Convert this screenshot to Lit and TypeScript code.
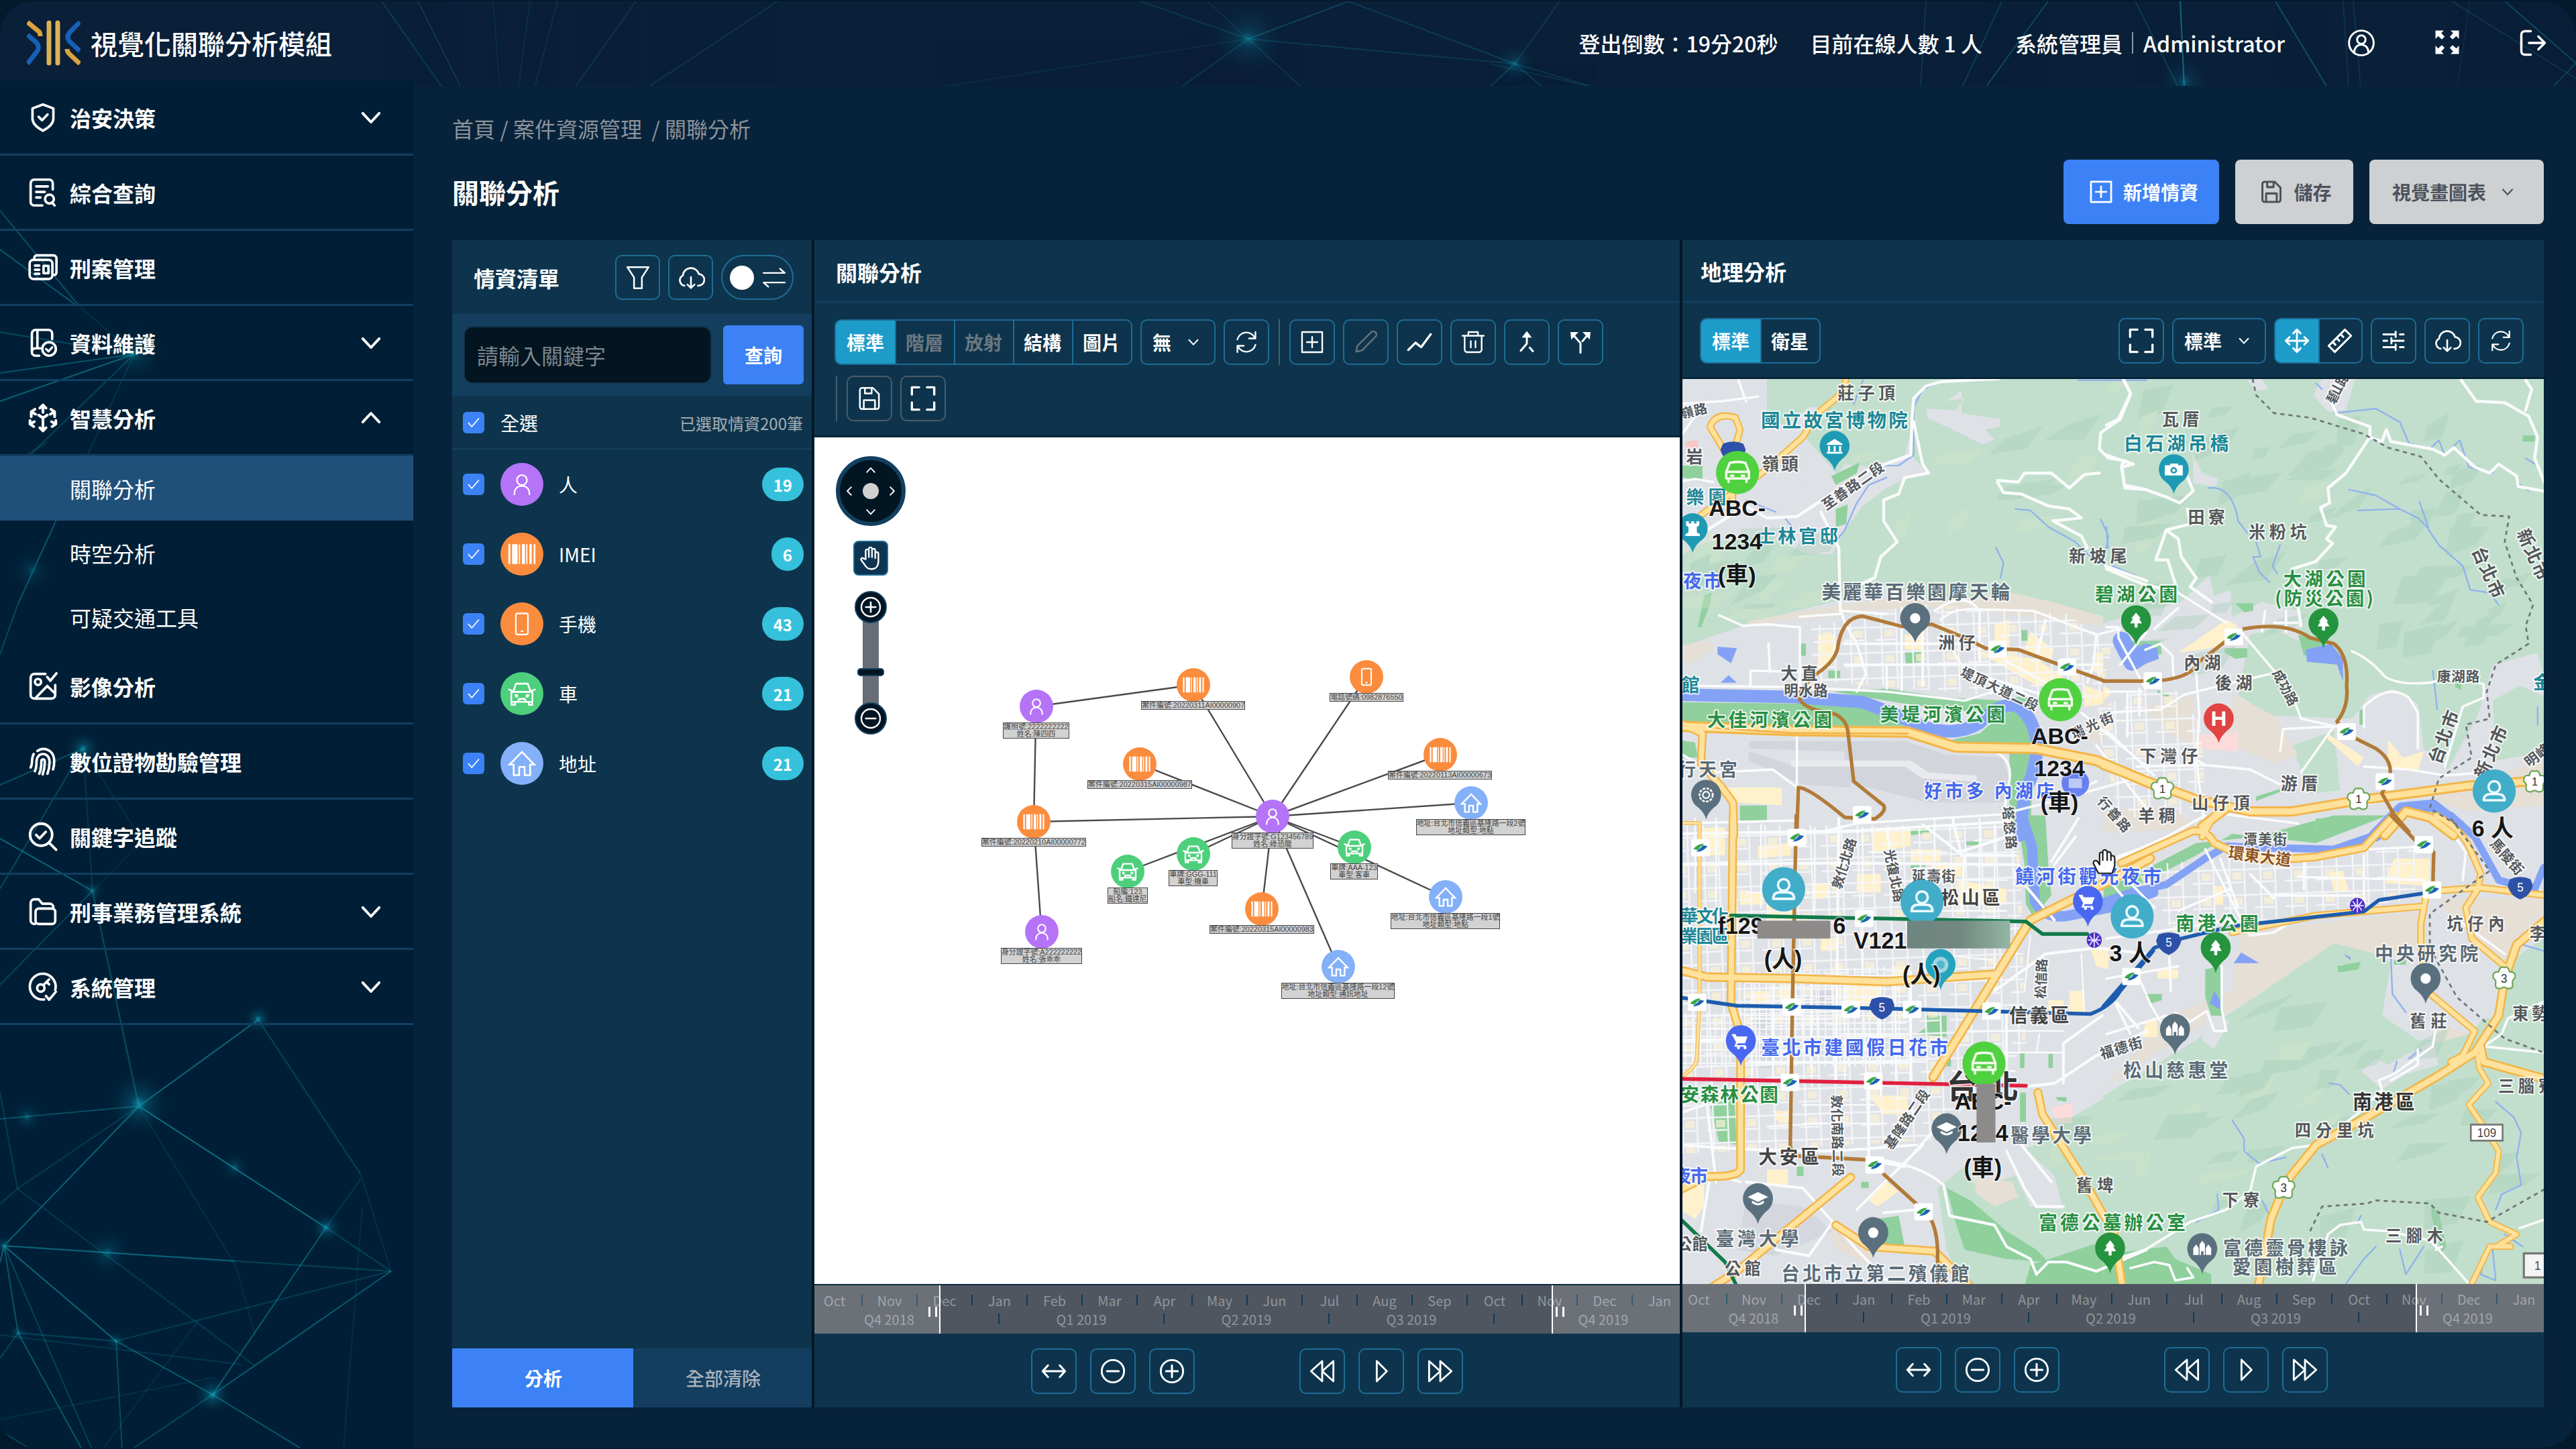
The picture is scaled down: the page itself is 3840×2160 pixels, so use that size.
import { LitElement, html, css, svg, nothing } from "lit";
import { customElement, property } from "lit/decorators.js";
import { classMap } from "lit/directives/class-map.js";

/* ------------------------------------------------------------------ icons */
const ICONS: Record<string, any> = {
  filter: svg`<path d="M2.5 2.5h19l-6 9.3v9.7h-7v-9.7z"/>`,
  cloud: svg`<path d="M6.5 18.8A4.6 4.6 0 0 1 5 10.2 7 7 0 0 1 18.7 8.8 5 5 0 0 1 18 18.8M12 11.5v9M9 17.8l3 3 3-3"/>`,
  swap: svg`<path d="M2 7.5h20l-4.5-4M22 16.5H2l4.5 4"/>`,
  refresh: svg`<path d="M3.5 9.5A8.8 8.8 0 0 1 20 8M20.5 2.5V8.5h-6M20.5 14.5A8.8 8.8 0 0 1 4 16M3.5 21.5V15.5h6"/>`,
  plusbox: svg`<path d="M2.5 2.5h19v19h-19zM12 7v10M7 12h10"/>`,
  pencil: svg`<path d="M3 21l1-5.500L17 2.800a2.500 2.500 0 0 1 4.200 4L8.500 19.800z"/>`,
  trend: svg`<path stroke-width="2" d="M2 19l6.500-6.500 5 4L22 5"/>`,
  trash: svg`<path d="M2 6h20M7.500 6V2.500h9V6M4 6v13a2.500 2.500 0 0 0 2.500 2.500h11A2.500 2.500 0 0 0 20 19V6M9.800 11v6M14.200 11v6"/>`,
  merge: svg`<path stroke-width="2" d="M12 4v9.500L6 20.500M15 17.500l3 3.500"/><path fill="currentColor" stroke="none" d="M7 7.500l5-6.500 5 6.500z"/>`,
  split: svg`<path stroke-width="2" d="M12 22.500V13L5 5M14 11l5-6"/><path fill="currentColor" stroke="none" d="M2 2h8l-7.200 7.500zM22 2h-8l7.200 7.500z"/>`,
  save: svg`<path d="M3.500 4.500a2 2 0 0 1 2-2H15l5.500 5.500v11.500a2 2 0 0 1-2 2h-13a2 2 0 0 1-2-2zM8 2.500v5h6v-5M7 21.500v-8h10v8"/>`,
  frame: svg`<path stroke-width="2" d="M2 8.500V2h6.500M15.500 2H22v6.500M22 15.500V22h-6.500M8.500 22H2v-6.500"/>`,
  move: svg`<path stroke-width="1.800" d="M12 1.500v21M1.500 12h21M8.500 5L12 1.500 15.500 5M8.500 19l3.500 3.500 3.500-3.500M5 8.500L1.500 12 5 15.500M19 8.500l3.500 3.500-3.500 3.500"/>`,
  ruler: svg`<path stroke-width="1.800" d="M2 16.500L16.500 2 22 7.500 7.500 22zM5.500 13l2.500 2.500M9 9.500l2.500 2.500M12.500 6l2.500 2.500"/>`,
  sliders: svg`<path stroke-width="1.800" d="M2.500 6h11.500M14 3.500v5M18 6h3.500M2.500 12H6M10 12h11.500M10 9.500v5M2.500 18h11.500M14 15.500v5M18 18h3.500"/>`,
  fit: svg`<path stroke-width="1.900" d="M1.500 12h21M6.500 6.500L1.500 12l5 5.500M17.500 6.500l5 5.500-5 5.500"/>`,
  minus: svg`<circle cx="12" cy="12" r="10.500" stroke-width="1.800"/><path stroke-width="1.900" d="M6.500 12h11"/>`,
  plus: svg`<circle cx="12" cy="12" r="10.500" stroke-width="1.800"/><path stroke-width="1.900" d="M6.500 12h11M12 6.500v11"/>`,
  rew: svg`<path stroke-width="1.700" d="M12 3v18L2 12zM22 3v18L12 12z"/>`,
  play: svg`<path stroke-width="1.700" d="M8 3l9 9-9 9z"/>`,
  ff: svg`<path stroke-width="1.700" d="M2 3v18l10-9zM12 3v18l10-9z"/>`,
  down: svg`<path stroke-width="2.200" d="M5 8.500l7 7.500 7-7.500"/>`,
  up: svg`<path stroke-width="2.200" d="M5 15.500L12 8l7 7.500"/>`,
  left: svg`<path stroke-width="2.200" d="M15.500 5L8.500 12l7 7"/>`,
  right: svg`<path stroke-width="2.200" d="M8.500 5l7 7-7 7"/>`,
  hand: svg`<path d="M7.200 13V5.200a1.500 1.500 0 0 1 3 0V11V3.300a1.500 1.500 0 0 1 3 0V11V4.600a1.500 1.500 0 0 1 3 0V12V7.800a1.500 1.500 0 0 1 3 0V15c0 4.500-2.500 7.300-6.500 7.300-3.700 0-5.200-1.800-6.700-4.500L3 13.700c-.6-1.500 1-2.400 2.200-1.300z"/>`,
  user: svg`<circle cx="12" cy="7.800" r="5"/><path d="M4.500 22c0-5.500 3-8.500 7.500-8.500s7.500 3 7.500 8.500"/>`,
  barcode: svg`<g fill="currentColor" stroke="none"><path d="M1 4h1.600v16H1zM4 4h4.500v16H4zM9.500 4h1v16h-1zM12 4h2.500v16H12zM15.500 4h1v16h-1zM18 4h2v16h-2zM21.500 4H23v16h-1.500z"/></g>`,
  phone: svg`<rect x="6" y="1.500" width="12" height="21" rx="1.800"/><path d="M11.300 19.300h1.400"/>`,
  car: svg`<path d="M4.500 10.500L7 3.500h10l2.500 7M3 10.500h18v8.500H3zM1 8.500l2.500 1M23 8.500l-2.500 1M3.200 19v2.500h3V19M17.800 19v2.500h3V19M8.500 19l1-2.500h5l1 2.500"/><path fill="currentColor" stroke="none" d="M5.500 12.500h3.200v2.800H6.500zM18.500 12.500h-3.200v2.800h2.200z"/>`,
  home: svg`<path stroke-linejoin="miter" d="M1.500 13L12 2.200 22.500 13H19v9h-4.700v-7h-4.600v7H5v-9z"/>`,
  check: svg`<path d="M5 12.500l4.500 5L19 6.500"/>`,
  account: svg`<circle cx="12" cy="12" r="10.500"/><circle cx="12" cy="9.200" r="3.600"/><path d="M6 20c0-4 2.500-6.500 6-6.500s6 2.500 6 6.500"/>`,
  expand: svg`<g fill="currentColor" stroke="none"><path d="M1.500 1.500h7.500L6.700 3.800l3 3.200L7.200 9.500l-3.300-3L1.500 9zM22.500 1.500H15l2.300 2.300-3 3.200 2.500 2.500 3.300-3L22.500 9zM1.500 22.500H9l-2.300-2.300 3-3.200-2.500-2.500-3.300 3L1.500 15zM22.500 22.500H15l2.300-2.300-3-3.200 2.500-2.500 3.300 3 2.400-2.500z"/></g>`,
  logout: svg`<path stroke-width="2" d="M10 2H5a3 3 0 0 0-3 3v14a3 3 0 0 0 3 3h5M8.500 12H22M16.500 6.500L22 12l-5.500 5.500"/>`,
  shield: svg`<path stroke-width="2" d="M12 1.500l8.500 3.200V13c0 4.500-4 7.500-8.500 9.800C7.500 20.500 3.500 17.500 3.500 13V4.700zM8.500 11.500l2.800 2.800 4.500-4.700"/>`,
  docsearch: svg`<path stroke-width="2" d="M20 9.500V4.500a3 3 0 0 0-3-3H5a3 3 0 0 0-3 3v15a3 3 0 0 0 3 3h6.500M6.500 7h9.500M6.500 11.500h7M6.500 16h3.500M21.500 22.500l-2.200-2.300"/><circle cx="17.300" cy="17.300" r="3.600" stroke-width="2"/>`,
  news: svg`<path stroke-width="2" d="M5 5.500V4a2 2 0 0 1 2-2h13.500A2.500 2.500 0 0 1 23 4.500V16a2 2 0 0 1-2 2"/><rect x="1.200" y="5.700" width="18.500" height="15.500" rx="3" stroke-width="2"/><path stroke-width="2" d="M5.500 10.300H9M5.500 13.700H9M5.500 17H9M12.500 10.500h4v6h-4z"/>`,
  docsafe: svg`<path stroke-width="2" d="M19.500 9V4.500a3 3 0 0 0-3-3H6a3 3 0 0 0-3 3v14.800M7.500 1.500v14.800M10 16.500H6a3 3 0 0 0 0 6h3"/><circle cx="17" cy="17" r="5.500" stroke-width="2"/><path stroke-width="1.800" d="M14.500 17l2 2 3-3.300"/>`,
  smart: svg`<path stroke-width="2.200" d="M12 7.500V1.800M9.500 4L12 1.500 14.500 4M12 16.500v5.700M9.500 20l2.500 2.500L14.500 20M12 12v3.500M12 12L8.500 9.700M12 12l3.500-2.300M5.500 5L2.500 7v4M1.500 14v3l3 2M18.500 5l3 2v4M22.500 14v3l-3 2M2.500 7l3.500 2M21.500 7L18 9M1.500 17L5 15M22.500 17L19 15"/>`,
  image: svg`<path stroke-width="2" d="M14 2H5a3 3 0 0 0-3 3v14a3 3 0 0 0 3 3h14a3 3 0 0 0 3-3v-8M6 21.500l9.500-9.800L22 18M15.500 4.500l2.500 3 5-6"/><circle cx="8" cy="8.500" r="2.500" stroke-width="2"/>`,
  finger: svg`<path stroke-width="2" d="M7.500 3.500c5-3.500 12.500-1 13.500 6 .4 3.500 0 6.500-.8 9M4.500 6c-1.500 2.500-1.300 5-1.500 7.500-.1 1.500-.5 2.500-1 3.500M5.500 20c1-2.500 1.300-4.500 1.300-8 0-4 2.700-6 5.200-6 3 0 5.300 2.200 5.400 6 .1 4-.6 7-1.700 10M9 22c1.500-3 1.700-6 1.700-10 0-2.200 2.800-2.200 2.800 0 .1 4-.4 7-1.700 10.500"/>`,
  track: svg`<circle cx="10.500" cy="10.500" r="9" stroke-width="2.100"/><path stroke-width="2.100" d="M17.200 17.200l5.500 5.500M6.500 10.700l2.800 2.800 5-5.300"/>`,
  folder: svg`<path stroke-width="2" d="M5.500 22H5a3 3 0 0 1-3-3V5a3 3 0 0 1 3-3h3.500L11.500 5.500h6a3 3 0 0 1 3 3"/><rect x="6" y="9.500" width="16" height="12.500" rx="2.500" stroke-width="2"/>`,
  gear: svg`<path stroke-width="2" d="M22 14.500A10.500 10.500 0 1 0 13 22.300M14.500 19.500l2.500 3 5.500-6.500M12.500 10.500L17 6M15 8l2 2"/><circle cx="10.300" cy="13" r="3" stroke-width="2"/>`,
};

const icon = (name: string, size = 40, sw = 1.5) => html`<svg width=${size} height=${size} viewBox="0 0 24 24" fill="none"
  stroke="currentColor" stroke-width=${sw} stroke-linecap="round" stroke-linejoin="round">${ICONS[name]}</svg>`;

const shared = css`
  * { box-sizing: border-box; }
  svg { display: block; flex: none; }
  .btn {
    width: 68px; height: 68px; flex: none;
    display: flex; align-items: center; justify-content: center;
    border: 2px solid #1e6c96; border-radius: 10px; color: #fff;
  }
`;

/* --------------------------------------------------------------- timeline */
const MONTHS = ["Oct", "Nov", "Dec", "Jan", "Feb", "Mar", "Apr", "May", "Jun", "Jul", "Aug", "Sep", "Oct", "Nov", "Dec", "Jan"];
const QUARTERS: [string, number][] = [["Q4 2018", 286], ["Q1 2019", 246], ["Q2 2019", 246], ["Q3 2019", 246], ["Q4 2019", 288]];

@customElement("time-player")
class TimePlayer extends LitElement {
  static styles = [shared, css`
    :host { display: flex; flex-direction: column; font-family: "Noto Sans CJK TC", sans-serif; --from: 188px; --shift: 0px; }
    :host([narrow]) { --from: 184px; --shift: 5px; }
    .strip { position: relative; height: 72px; background: #50565f; overflow: hidden; display: flex; justify-content: center; padding-right: var(--shift); }
    .scale { width: 1312px; flex: none; display: flex; flex-direction: column; padding-top: 9px; color: #8f959c; font-size: 20px; line-height: 28px; }
    .line { display: flex; height: 28px; }
    .m, .q { position: relative; flex: none; text-align: center; height: 28px; }
    .m { width: 82px; }
    .q.first { padding-left: 0; width: 286px; text-indent: -41px; }
    .q.last { padding-left: 38px; }
    .m + .m::before, .q + .q::before {
      content: ""; position: absolute; left: -1px; top: 5px; width: 2px; height: 16px; background: #0d3a5a;
    }
    .shade { position: absolute; top: 0; bottom: 0; background: rgba(255,255,255,.16); }
    .shade.l { left: 0; width: var(--from); border-right: 2px solid #fff; }
    .shade.r { right: 0; width: 191px; border-left: 2px solid #fff; }
    .grip { position: absolute; top: 32px; width: 13px; height: 15px; border: solid #fff; border-width: 0 3px; }
    .l .grip { right: 3px; }
    .r .grip { left: 4px; }
    .ctl { flex: 1; display: flex; justify-content: center; gap: 20px; padding-top: 22px; padding-right: var(--shift); }
    .gap { width: 116px; }
  `];
  render() {
    return html`
      <div class="strip">
        <div class="scale">
          <div class="line">${MONTHS.map((m) => html`<div class="m">${m}</div>`)}</div>
          <div class="line">${QUARTERS.map(([q, w], i) => html`<div
            class=${classMap({ q: true, first: i === 0, last: i === 4 })} style="width:${w}px">${q}</div>`)}</div>
        </div>
        <div class="shade l"><div class="grip"></div></div>
        <div class="shade r"><div class="grip"></div></div>
      </div>
      <div class="ctl">
        ${["fit", "minus", "plus"].map((n) => html`<div class="btn">${icon(n, 38)}</div>`)}
        <div class="gap"></div>
        ${["rew", "play", "ff"].map((n) => html`<div class="btn">${icon(n, 40)}</div>`)}
      </div>`;
  }
}

/* ------------------------------------------------------------- link graph */
type Kind = "user" | "barcode" | "phone" | "car" | "home";
const COLORS: Record<Kind, string> = { user: "#b573f8", barcode: "#fb8c3e", phone: "#fb8c3e", car: "#4dcf7c", home: "#83b0f8" };
const NODES: [string, Kind, number, number, string[]][] = [
  ["p1", "user", 1544.5, 1053, ["護照號:2222222222", "姓名:陳四四"]],
  ["i1", "barcode", 1778.7, 1021, ["案件編號:20220311AI00000907"]],
  ["ph", "phone", 2037, 1009, ["電話號碼:0982876550"]],
  ["i2", "barcode", 1699, 1139, ["案件編號:20220315AI00000987"]],
  ["i3", "barcode", 2146.6, 1125, ["案件編號:20220113AI00000673"]],
  ["h1", "home", 2192.5, 1197, ["地址:台北市信義區基隆路一段2號", "地址類型:地點"]],
  ["c", "user", 1897, 1217, ["身分證字號:G123456789", "姓名:綠恐龍"]],
  ["i4", "barcode", 1541, 1225, ["案件編號:20220210AI00000772"]],
  ["a", "car", 1681, 1299, ["船編:123", "船名:鐵達尼"]],
  ["b", "car", 1778.7, 1273, ["車牌:GGG-111", "車型:機車"]],
  ["d", "car", 2018.6, 1263, ["車牌:AAA-123", "車型:客車"]],
  ["i5", "barcode", 1881, 1354.7, ["案件編號:20220315AI00000983"]],
  ["h2", "home", 2154.6, 1337, ["地址:台北市信義區基隆路一段1號", "地址類型:地點"]],
  ["h3", "home", 1994.5, 1441, ["地址:台北市信義區基隆路一段12號", "地址類型:通訊地址"]],
  ["p2", "user", 1552.5, 1388.7, ["身分證字號:A222222222", "姓名:張乖乖"]],
];
const EDGES = ["p1 i1", "p1 i4", "i4 c", "i4 p2", "i1 c", "ph c", "i2 c", "i3 c", "h1 c", "a c", "b c", "d c", "i5 c", "h2 c", "h3 c"];

@customElement("link-graph")
class LinkGraph extends LitElement {
  static styles = [shared, css`
    :host { display: block; position: relative; background: #fff; overflow: hidden; font-family: "Liberation Sans", "Noto Sans CJK TC", sans-serif; }
    .edges { position: absolute; inset: 0; width: 100%; height: 100%; }
    .node { position: absolute; width: 0; height: 0; display: flex; flex-direction: column; align-items: center; }
    .disc { flex: none; width: 50px; height: 50px; margin-top: -25px; border-radius: 50%; display: flex; align-items: center; justify-content: center; color: #fff; }
    .label { flex: none; margin-top: -1px; border: 1px solid #444; background: #d2d2d2; color: #444; font-size: 10.9px; line-height: 11px; white-space: nowrap; text-align: center; position: relative; z-index: 1; }
    .tools { position: absolute; left: 32px; top: 28px; width: 104px; display: flex; flex-direction: column; align-items: center; color: #fff; }
    .pad { width: 104px; height: 104px; border-radius: 50%; background: #021522; border: 6px solid #12405f; display: grid; grid-template-columns: 24px 24px 24px; grid-template-rows: 28px 28px 28px; justify-content: center; align-content: center; align-items: center; justify-items: center; column-gap: 8px; row-gap: 3px; }
    .knob { width: 24px; height: 24px; border-radius: 50%; background: #d0d0d0; }
    .hand { margin-top: 22px; width: 52px; height: 52px; border-radius: 8px; border: 2px solid #1e6c96; background: #0d3450; display: flex; align-items: center; justify-content: center; }
    .zoom { margin-top: 23px; height: 214px; display: flex; flex-direction: column; align-items: center; justify-content: space-between; position: relative; }
    .zb { width: 48px; height: 48px; border-radius: 50%; background: #021522; border: 2px solid #12405f; display: flex; align-items: center; justify-content: center; position: relative; }
    .rail { position: absolute; top: 24px; bottom: 24px; width: 24px; background: #686c76; }
    .thumb { position: absolute; top: 115px; width: 40px; height: 12px; border-radius: 5px; background: #021522; border: 2px solid #12405f; }
  `];
  render() {
    const at = Object.fromEntries(NODES.map(([id, , x, y]) => [id, [x - 1214, y - 652]]));
    return html`
      <svg class="edges" viewBox="0 0 1290 1262">${EDGES.map((e) => {
        const [s, t] = e.split(" ");
        return svg`<line x1=${at[s][0]} y1=${at[s][1]} x2=${at[t][0]} y2=${at[t][1]} stroke="#4a4a4a" stroke-width="2.400"/>`;
      })}</svg>
      ${NODES.map(([id, kind, , , lines]) => html`
        <div class="node" style="left:${at[id][0]}px;top:${at[id][1]}px">
          <div class="disc" style="background:${COLORS[kind]}">${icon(kind, kind === "barcode" ? 34 : kind === "home" || kind === "car" ? 32 : 28, 1.8)}</div>
          <div class="label">${lines.map((l) => html`<div>${l}</div>`)}</div>
        </div>`)}
      <div class="tools">
        <div class="pad">
          <i></i>${icon("up", 20, 2.4)}<i></i>
          ${icon("left", 20)}<div class="knob"></div>${icon("right", 20)}
          <i></i>${icon("down", 20)}<i></i>
        </div>
        <div class="hand">${icon("hand", 38)}</div>
        <div class="zoom">
          <div class="rail"></div><div class="thumb"></div>
          <div class="zb">${icon("plus", 32)}</div>
          <div class="zb">${icon("minus", 32)}</div>
        </div>
      </div>`;
  }
}

/* -------------------------------------------------------------------- map */
/* The map is cut in four tiles, each with its own local coordinates. */
type Tile = "A" | "B" | "C" | "D";
const TILE: Record<Tile, string> = {
  A: "translate(2500 540) scale(.4464)",
  B: "translate(3140 540) scale(.4464)",
  C: "translate(2500 1220) scale(.4464 .4592)",
  D: "translate(3140 1220) scale(.4464 .4592)",
};
const HILL = "#c1dfcc", CITY = "#dee1e6", SAND = "#e5dfd6", PARK = "#8fd09d", WATER = "#83a2f6", YEL = "#fff1cb", PINK = "#fbdcda";

const AREAS: [Tile, string, string][] = [
  ["A", HILL, "M300 50H1580V890L1200 800 1100 770 880 800 660 740 560 790 400 830 250 870 16 950V640L100 600 300 580 440 640 520 620 600 450 420 240 300 200z"],
  ["A", CITY, "M0 50H290L285 140 360 220 440 150 500 150 420 240 360 300 420 280 410 400 440 450 480 470 520 400 560 340 640 350 760 310 790 200 800 180 780 310 840 370 760 390 700 420 620 480 560 560 520 640 440 640 300 540 200 600 100 590 0 640z"],
  ["A", CITY, "M830 155L930 160 960 120 900 130 950 95 950 170 1080 190 1080 215 1030 225 1060 260 1020 275 900 215 840 190z"],
  ["A", PARK, "M515 380L610 335 600 370 530 410zM530 490L570 475 565 540 530 550zM70 885L90 780 115 770 110 810 80 885zM0 345L85 345 85 400 0 380z"],
  ["A", SAND, "M230 865L400 835 560 810 680 790 880 800 1100 765 1250 800 1568 890 1568 900 1250 860 1000 830 800 820 640 830 520 850 380 860 250 880z"],
  ["A", SAND, "M0 950L90 930 130 950 60 1000 0 1010zM1340 1260L1470 1180 1568 1150V1300L1430 1270z"],
  ["A", PARK, "M0 1135L420 1140 600 1150 760 1200 900 1265 1010 1240 1090 1170 1160 1165 1250 1290 920 1270 780 1215 0 1210z"],
  ["A", PARK, "M520 1100L700 1090 900 1120 1100 1130 1160 1110 1190 1150 1000 1170 760 1140z"],
  ["A", PARK, "M1110 1290H1190L1180 1568H1110zM0 1260L60 1270 70 1320 0 1320zM210 1480H300V1530H210zM760 965H815V1000L765 1010zM410 940h20v40h-20zM505 1030h40v25h-40zM1150 895h20v35h-20zM1430 885h20v30h-20z"],
  ["A", "#d3d5dc", "M240 1265H760L900 1310 1090 1320 1110 1400 1090 1470 840 1470 560 1400 560 1300 240 1290zM240 1300L400 1350H560L580 1420 420 1410 240 1330z"],
  ["A", "#e8eaee", "M380 1330H780L840 1370 1000 1380V1400L820 1390 760 1350H380z"],
  ["A", YEL, "M470 910H530V970L470 1040zM1060 870L1110 860V960L1060 930zM1010 970L1200 990 1300 1060 1200 1080zM760 910h60v50h-60zM1360 1080L1450 1110 1440 1140 1360 1150zM150 1420H350V1480L200 1470zM1180 900L1260 960 1240 1000 1160 960zM1390 970H1440V1060L1390 1030z"],
  ["A", WATER, "M135 950L200 955 180 1005 135 975zM145 1070L172 1045 200 1070z"],
  ["A", "#f8c8c6", "M30 265L70 260V290L30 290z"],
  ["B", HILL, "M-10 50H1470V1568H-10z"],
  ["B", CITY, "M-10 870L250 800 345 710 360 780 415 760 420 850 520 800 640 830 650 930 500 960 440 1110 560 1180 820 1190 880 1110 960 1090 1040 1140 1060 1290 1140 1360 1240 1180 1290 1010 1440 970 1470 1080V1568H-10z"],
  ["B", CITY, "M720 55H830L800 160 740 165 690 110zM290 310L320 370 375 390 365 415 290 405zM470 60L520 55 540 90 500 95z"],
  ["B", HILL, "M480 910L560 890 640 930 800 990 810 1180 540 1180 440 1110zM620 1280L760 1230 780 1430 680 1440zM1060 1100L1140 1030 1270 1070 1170 1200 1080 1200zM1290 1130L1380 1080 1470 1120V1300L1300 1330z"],
  ["B", SAND, "M420 1110L560 1180 640 1310 560 1340 420 1280zM130 1150L290 1110V1280L200 1240zM1040 1440L1470 1330V1480L1200 1500zM-10 1500L200 1480 330 1560-10 1568z"],
  ["B", PARK, "M50 930L180 930 185 975 110 980zM640 910L720 930 740 960 660 980zM395 955H470V985L430 990 395 970zM430 805L490 805 490 830 460 835zM845 1160H860V1210H845zM1165 1060H1185V1095L1165 1085zM700 1525L745 1520V1568H700zM500 1450L580 1425 580 1435 500 1465zM170 1095L210 1110 205 1120 170 1105zM1390 245h40v20h-40z"],
  ["B", WATER, "M50 925L90 945 170 955 175 990 110 1015 60 985zM665 960L750 940 790 990V1065L770 1010 670 1000z"],
  ["B", YEL, "M240 970L400 860 440 880 380 950zM940 1260L990 1320 1060 1300 1040 1370 940 1350zM740 1240L860 1320 840 1350 740 1260zM-10 1080L20 1100-10 1130z"],
  ["B", PINK, "M310 1245L440 1235V1300L310 1290z"],
  ["C", PARK, "M1135-10H1230L1240 160 1250 250 1190 320 1165 280 1160 150zM775 35L860 25V45L775 55zM830 640H900V710L800 700 830 680zM110 930L190 900 200 1060 140 1050zM1145 890H1165V985H1145zM1145 760h15v50h-15zM1240 765h15v45h-15zM900 770h15v35h-15zM670 1300L740 1290 760 1390 690 1400zM1265 905L1300 905 1300 920 1270 915zM780 150h50v12h-50zM965 75h55v12h-55zM400 1130h22v30h-22zM615 1180h25v20h-25z"],
  ["C", HILL, "M1130 1080L1200 1060 1300 980 1568 830V1520H960L900 1400 870 1200 960 1130z"],
  ["C", PARK, "M900 1200L980 1240 1100 1340 1200 1400 1240 1440 1100 1430 960 1400 930 1310zM1180 1450L1400 1380 1568 1370V1520H1160z"],
  ["C", CITY, "M960 1110L1140 1050 1260 1160 1290 1270 1180 1260 1130 1160 1000 1200z"],
  ["C", SAND, "M990 1160L1120 1180 1140 1230 1060 1260 1000 1220zM510 1330L660 1400 640 1450 530 1400z"],
  ["C", PINK, "M1250 940L1320 925V990L1270 990z"],
  ["C", YEL, "M90 30H160V120H90zM270 90L380 80V120L270 130zM210 240H290V280H210zM300 280h90v50h-90zM650 30H780V90L650 110zM780 100H880V140H780zM450 210h60v50h-60zM600 180h80v60h-80zM850 150h100v40h-100zM560 520h120v100h-120zM480 390h60v40h-60zM340 540h40v60h-40zM720 480h60v60h-60zM250 560h60v40h-60zM320 950H380V990L330 980zM640 900H770V960L690 960zM940 200L1100 230 1100 280 940 280zM300 1140h70v50h-70zM10 1170H90V1260L60 1300 10 1270zM1310 560h50v80h-50zM1380 420H1440V490L1400 480zM1240 590h50v50h-50zM700 1180L740 1210 670 1260 640 1240z"],
  ["C", "#d5d7de", "M230 1240L420 1260 520 1340 330 1420 200 1400zM240 640L330 600V700L250 690zM270 720h60v90h-60zM430 560h100v60h-100z"],
  ["D", HILL, "M-10 900L60 860 300 720 400 640 480 590 760 405 880 430 950 470 920 640 1040 720 1100 720 1220 700 1300 590 1370 450 1470 380V1520H-10z"],
  ["D", SAND, "M450 370L1060 300 1080 420 940 450 760 405 480 590 380 640 200 740 0 870 200 640 320 600 420 560zM1100 260L1470 260V330L1360 420 1320 470 1160 330zM1080 650L1210 700 1100 730z"],
  ["D", CITY, "M850 820L900 780 940 800 1090 720 1110 800 1000 830 920 880zM1120 480L1250 440 1320 540 1290 650 1200 640 1110 560zM320 700L340 620 410 660 360 750 320 720z"],
  ["D", PARK, "M60 240L300 120 420 50 700 80 940-10H760L500 60 300 80 100 180-10 230V270zM330 490L380 480 385 640 350 640 330 580zM770 480L850 465 840 490 775 500zM125 570H185V590L150 600zM1085 1260L1110 1280 1135 1390 1120 1410 1085 1290zM40 1410L200 1390 230 1430 350 1480V1520H-10V1450zM700 0H740V35H700zM960 460L1000 455V475H960zM1010 140h65v14h-65z"],
  ["D", WATER, "M425 470L450 435 510 470zM790 440L815 450 815 460zM345 600L360 560 380 590 380 620z"],
  ["D", YEL, "M745 175L790 170 810 235 760 240zM960 130H1080V220L930 210zM170 490H240V520H170zM130 660L170 650V710H120zM360 220h30v60h-30z"],
];

const STREAMS: [Tile, string, number][] = [
  ["A", "M0 1110L400 1118 620 1135 740 1180Q900 1270 1010 1205 1080 1130 1140 1150 1195 1190 1205 1290L1185 1380 1160 1440 1145 1580", 42],
  ["C", "M1150-10L1185 90 1195 270Q1230 330 1310 315L1440 290 1590 240", 34],
  ["D", "M-10 270L80 240 200 215 330 130 400 90 520 95 760 100 880 60 960-20", 24],
  ["B", "M900 1580L985 1490 1090 1480 1180 1550", 40],
  ["D", "M1150-10L1230 60 1310 200 1400 225M1430 230L1460 160", 24],
  ["A", "M1568 60L1340 60M1000 60L880 65 820 90 790 150 790 310 740 345 690 345M700 385L640 410 600 470 560 560 530 600M590 140L620 60M1130 490L1180 495 1240 550 1330 600 1370 640 1430 680 1530 710M1065 620L1090 670 1080 720M1415 525L1440 580 1430 640M230 460L330 500M360 520L380 545", 5],
  ["A", "M1485 930L1520 1000 1568 970", 60],
  ["B", "M760 170L900 155 980 200 1010 270 1080 290 1110 260 1130 310 1180 260 1210 350 1290 370M810 425L900 445 980 490 840 495M980 490L1040 520 1070 550 1110 610 1190 680 1215 760 1280 770 1310 810M1045 465L1075 550M340 420Q420 410 440 530L470 570M500 600L515 650 490 650 510 700 545 735M580 610L555 680 570 705M0 550L5 620M20 680L90 710M1370 400L1410 430M1400 320L1430 340M1090 1030L1105 1160M1440 1150V1210M700 70L720 90", 5],
  ["D", "M950 450L955 570 1000 630M745 860L780 865 810 895M420 980L460 1040 460 1080 510 1120 600 1100M720 1090L740 1135M1300 920L1360 970 1385 1020 1370 1100 1385 1190 1320 1220 1300 1270M1390 1390L1330 1350M800 1510L860 1430 900 1390M980 1400L1000 1480 1060 1390M1270 1390L1250 1480 1300 1500 1290 1400M370 1220L375 1270 300 1310M520 1240L540 1280M850 1290L840 1310M1050 750L1010 780M970 790L960 820M1390 410L1460 430", 5],
];

const WHITE: [Tile, string, number][] = [
  ["A", "M1075 55L880 65 830 80 790 120 785 180 780 310 640 360 500 450 400 515 300 520 230 480 100 560M790 200L820 340 840 370 760 385 740 440 690 460 690 530 735 600 680 650 660 720 570 760M480 500L540 620 545 830M1490 55L1515 105 1480 190 1415 235 1410 290 1440 320 1500 330 1485 340 1495 420 1568 425M1070 395L1140 400 1160 370 1250 370 1310 420 1360 375 1410 370M1070 400L1090 435 1150 440 1240 480 1310 490 1350 520 1255 530 1350 580 1370 620M1430 680L1568 730", 10],
  ["A", "M0 140L150 130 270 115M205 60L230 130M0 400L60 390 120 400M60 180L10 250M16 1080L400 1085 700 1100 960 1130 1120 1080 1200 1130M245 1080V1030L470 1035M305 940L310 1035M140 845L220 880 300 875 410 885V1080M410 850L545 840M545 820L560 870 600 940 630 1040 600 1100M750 820V1095M555 940H1020M560 1010H1100M820 900V1080M700 1010V1090M400 1180V1568M0 1300L120 1370 320 1360 400 1420M0 1540L400 1530M480 1568L600 1540 1080 1510 1240 1470 1568 1380M550 830L700 840M880 860Q920 820 1000 825L1190 830 1400 910 1480 890M860 830Q960 760 1010 830V1000M1230 860L1200 990M1400 910L1390 1010 1370 1070M920 960L960 1030 1060 1060 1250 1120M1100 1000L1250 1080M1060 1300Q1130 1330 1105 1420L1090 1510M1350 1170L1470 1270 1568 1350M1400 1280L1568 1490M1250 1470L1400 1400M1568 900L1480 1010M1300 1010H1420", 8],
  ["B", "M55 55L80 105 40 190 0 210M0 310L90 340 50 350 60 410 130 425 200 450 245 470 290 430 265 370M270 490L280 540 200 560 240 590 250 650 300 720 280 750 350 800M200 560L165 660 205 660 230 740M0 690L120 740 240 770M740 110L770 175 880 215 880 250 800 370 740 420 745 470 715 485 735 545 765 550 735 590 755 605 700 665 620 690 650 880M880 250L920 265 935 225 950 265 1090 290 1130 310 1160 285 1230 350 1280 370 1310 340 1370 380 1375 415 1460 430M1185 60L1235 130 1330 135 1410 180 1440 250 1430 320 1470 420M1400 60L1420 90 1400 160", 10],
  ["B", "M240 820L160 890M0 885H40V920L130 1090M240 770L400 870M300 1040L310 1180 300 1330 330 1568M450 900L560 1030 600 1060 650 1190 760 1215 650 1370M0 1170L180 1160 260 1110 420 1070 550 1040M820 965Q880 990 930 1050 980 1080 1080 1070L1160 1050 1260 1075 1260 1120 1190 1150 1130 1350M0 1230L160 1380M100 1350L330 1345 480 1360 580 1410M330 1345L250 1300M580 1300L590 1225 780 1215M860 1220V1150Q940 1070 1010 1120L1040 1170V1290M860 1350L1010 1360 1130 1380 1260 1370M520 900L530 830M560 870H640M600 830V900M650 1500L900 1470M400 1510L640 1540M70 1100V1250M110 1090V1180M130 960L180 940 220 980 225 1060M0 1100H120", 8],
  ["C", "M0 50L600 40 1120 10M540 0L530 860M0 150L540 145 1140 150M0 720L340 715M780 500V860M100 930L130 1180M0 960L90 930M0 1060L250 1075 520 1080 800 1060M230 1180L420 1200 520 1310 600 1400 700 1500M640 880V1110L760 1130M860 1010L760 1120M600 1270L820 1060M690 1110Q820 1130 890 1190L910 1290 1060 1320 1100 1390 1180 1430 1200 1480 1240 1440 1300 1440 1400 1470 1568 1400M1170 870L1260 860 1400 770 1568 690M1100 620V860M1060 560L1230 440 1400 420 1568 440M1290 860V730L1420 640M1470 600L1540 680M950 120L920 0M960 120H1130M960 120L950 300M700 40L710 90M820 20L940 110 1100 60M1330 60L1260 150M1340 0L1250 140M1400 150L1568 90M1130 180L1260 330M1100 1080L1160 1200 1200 1260 1290 1260M1150 1060L1250 1180M110 1150L210 1180M80 1340L110 1160M330 1400L440 1420 520 1310M800 1270L690 1280", 9],
  ["C", "M60 0V240M130 0V280M280 20V290M460 30V300M620 30V520M860 0V220M1010 0V300M1060 20V560M250 560V900M320 540V900M450 540V870M560 540V880M680 540V900M730 540V860M230 240H380M420 240H600M640 110H900M780 200H1100M800 300H1100M240 650H520M550 700H760M240 790H520M550 790H830M930 690H1290M960 760H1290M920 820H1130M420 990H700M420 930H660M300 1000L500 990M860 440L1050 460M1210 700L1200 760M1180 380L1160 560M1350 440L1360 640", 5],
  ["D", "M-10 150L200 60 330-10M380 130L440 290M410 230L240 300M0 390L80 380 420 330M330 100L440 310 480 380 560 370 610 340M660 130V230M860 120V270M640 190L1060 200M560 250L840 250M480 180L560 260M40 170L160 290M880 100L1080 90M0 190L120 330M385 480V620L400 690H360L335 625 280 660 230 630M210 450L215 560M30 600L80 700M110 520L150 610 220 720M0 520L240 480M0 700L200 640M1100 680L1090 740 960 830 910 850 920 880 850 950 700 1060 620 1070 500 1130 480 1210 400 1270 280 1310 130 1400 0 1440M1470 590L1340 650 1320 700 1260 740 1460 760M1040 750V800L950 850M740 1350L780 1320 850 1310 860 1335 940 1340 1080 1370 1110 1400 1210 1510M1100 1400L1120 1390M690 1500L740 1350M1380 1330L1470 1300M80 1460L160 1440 210 1450 230 1500 290 1490 270 1460M1120 0L1200 110 1190 200M1160 320L1330 440", 8],
];

const HIGH: [Tile, string, number][] = [
  ["C", "M16 15H75V600L65 790Q40 830 0 845", 13],
  ["C", "M187-10L180 600 212 700V1140Q200 1165 100 1162L0 1210", 29],
  ["A", "M0 1200L85 1240 80 1340 150 1420 187 1470 190 1580", 28],
  ["A", "M565 50L555 100 470 170 420 250 330 330 270 380M185 460L190 350 110 215Q130 165 195 185L210 225 190 300 210 340M80 510L180 440", 24],
  ["C", "M0 490L100 515 400 520 700 530 920 515 1065 505", 30],
  ["C", "M855 840L1180 330 1430 210 1580 130", 32],
  ["D", "M50 145L290 40Q340 40 360 80L450 120 560 135 700 125 860 95 960-10", 28],
  ["B", "M-10 1345L300 1460 480 1500 620 1500 860 1460 1200 1415 1470 1395M930 1580L1000 1500 1080 1520 1160 1580M320 1550L400 1490", 34],
  ["A", "M0 1215L380 1230 770 1235 930 1285 1200 1290 1400 1330 1590 1410", 38],
  ["D", "M320 60L360-10M1100-10Q1180 30 1210 90L1250 180 1240 230 1200 290 1220 390 1330 480M1100 235L1250 225 1380 240 1470 250M420 370L700 315 1060 285M1070 240L1050 340 1050 420 1070 560 1230 690 1190 770 1150 790", 24],
  ["D", "M1240 770L1245 810 1275 860 1210 930 1260 1000 1310 1080 1300 1150 1240 1230 1280 1310 1370 1350 1310 1385 1350 1390 1280 1390 1215 1520", 21],
  ["D", "M1250 740L1260 790 1480 850M1480 320L1370 410 1330 520 1310 640 1230 760 1100 840 850 980 700 1060 600 1180 550 1300 505 1530", 31],
  ["C", "M1205 890L1220 960 1350 1160 1460 1350 1487 1520M580 1165L400 1310 200 1470 120 1520M530 1320L640 1390 860 1405 980 1520", 29],
];

const METRO: [Tile, string, string, number][] = [
  ["A", "M400 1568L405 1420Q440 1420 560 1520L660 1525Q700 1500 690 1480L590 1400 570 1230Q560 1170 480 1165 410 1150 405 1110L450 1050Q520 1010 535 960 550 850 620 848L750 882 850 875 960 920 1030 955 1140 960 1290 1015 1430 1065H1580", "#b17b38", 12],
  ["B", "M-10 1065L150 1065Q280 1060 310 1000L420 915 460 890Q600 865 680 920L760 940Q810 980 802 1080 810 1150 770 1200L800 1240 900 1290Q960 1330 945 1390L920 1440 960 1510 1010 1568", "#b17b38", 12],
  ["D", "M950-10L1030 70 1093 110 1090 230", "#b17b38", 12],
  ["C", "M398-10L385 610 378 1060 385 1095 630 1108M690 1155L820 1270Q865 1300 870 1400V1520", "#b17b38", 12],
  ["C", "M0 845L1165 868", "#e0203f", 12],
  ["C", "M0 580L200 608 600 615 1380 635Q1450 610 1480 560L1590 430", "#1d5cae", 12],
  ["D", "M-10 610L80 510 160 420 250 390 420 350 860 302 910 265 1080 240", "#1d5cae", 12],
  ["C", "M180 315L1165 335 1220 375 1370 375M0 1290L160 1440 200 1520", "#127a4a", 12],
];

const BORDER: [Tile, string][] = [
  ["B", "M488 55L500 110 560 170 680 185 860 240 940 285 1050 315 1110 390 1250 510 1345 515 1330 600 1370 720 1425 810 1400 880 1410 940 1300 1010 1270 1100 1280 1190 1200 1210 1220 1320 1110 1390 1080 1490 1180 1550"],
  ["D", "M1150 0L1280 170 1080 310V420L1170 580 1330 715 1460 760M680 1340L720 1260 870 1250 900 1240 1080 1250 1110 1280 1270 1310 1470 1200"],
];

const DARK = "#55585c", TEAL = "#1c8797", GRN = "#288f42", BLUE = "#4468ee", SLATE = "#5a6b77";
/* tile, text, x centre, y centre, width, size, colour, rotation */
const LABELS: [Tile, string, number, number, number, number, string, number?][] = [
  ["A", "莊子頂", 632, 98, 192, 56, DARK], ["A", "國立故宮博物院", 525, 190, 490, 64, TEAL], ["A", "嶺路", 55, 160, 90, 44, DARK, -14],
  ["A", "岩", 58, 312, 54, 56, DARK], ["A", "嶺頭", 344, 335, 122, 58, DARK], ["A", "至善路二段", 585, 410, 240, 46, DARK, -35],
  ["A", "樂園", 97, 448, 134, 60, TEAL], ["A", "士林官邸", 402, 575, 272, 62, TEAL], ["A", "夜市", 85, 725, 130, 62, BLUE],
  ["A", "美麗華百樂園摩天輪", 797, 763, 629, 64, SLATE], ["A", "新坡尾", 1405, 643, 194, 56, DARK],
  ["A", "洲仔", 934, 933, 124, 56, DARK], ["A", "大直", 408, 1035, 124, 56, DARK], ["A", "明水路", 430, 1093, 146, 48, DARK],
  ["A", "館", 45, 1075, 58, 60, TEAL], ["A", "大佳河濱公園", 309, 1190, 418, 62, GRN], ["A", "美堤河濱公園", 887, 1172, 418, 62, GRN],
  ["A", "行天宮", 102, 1357, 198, 60, SLATE], ["A", "好市多 內湖店", 1042, 1427, 434, 60, BLUE], ["A", "瑞光街", 1385, 1210, 150, 44, DARK, -24],
  ["A", "堤頂大道二段", 1078, 1088, 280, 44, DARK, 25], ["A", "行善路", 1462, 1508, 140, 44, DARK, 48],
  ["B", "碧山路", 770, 85, 110, 44, DARK, -62], ["B", "瓦厝", 248, 187, 124, 56, DARK], ["B", "白石湖吊橋", 233, 267, 350, 62, TEAL],
  ["B", "田寮", 334, 512, 124, 56, DARK], ["B", "米粉坑", 572, 562, 194, 56, DARK], ["B", "碧湖公園", 100, 771, 276, 62, GRN],
  ["B", "大湖公園", 728, 720, 276, 62, GRN], ["B", "(防災公園)", 727, 785, 329, 62, GRN], ["B", "內湖", 320, 998, 124, 56, DARK],
  ["B", "後湖", 425, 1067, 124, 56, DARK], ["B", "康湖路", 1175, 1047, 142, 46, DARK], ["B", "成功路", 600, 1085, 130, 44, DARK, 62],
  ["B", "台北市", 1280, 700, 180, 58, DARK, 66], ["B", "新北市", 1430, 640, 180, 58, DARK, 66], ["B", "台北市", 1122, 1250, 185, 58, DARK, -70],
  ["B", "新北市", 1280, 1300, 185, 58, DARK, -66], ["B", "下灣仔", 208, 1310, 194, 56, DARK], ["B", "游厝", 644, 1403, 124, 56, DARK],
  ["B", "山仔頂", 382, 1467, 194, 56, DARK], ["B", "羊稠", 168, 1510, 124, 56, DARK], ["B", "金", 1455, 1065, 56, 60, TEAL], ["B", "明峰街", 1455, 1295, 140, 46, DARK, -38],
  ["C", "塔悠路", 1113, 30, 140, 44, DARK, 84], ["C", "敦化北路", 555, 145, 170, 44, DARK, -72], ["C", "光復北路", 728, 185, 175, 44, DARK, 78], ["C", "延壽街", 857, 185, 145, 46, DARK],
  ["C", "松山區", 980, 253, 197, 60, "#444"], ["C", "饒河街觀光夜市", 1373, 183, 488, 62, BLUE], ["C", "華文化", 93, 313, 160, 58, TEAL], ["C", "業園區", 93, 378, 160, 58, TEAL],
  ["C", "信義區", 1209, 635, 200, 62, "#444"], ["C", "松信路", 1213, 520, 130, 44, DARK, -88], ["C", "臺北市建國假日花市", 593, 740, 625, 62, BLUE],
  ["C", "福德街", 1482, 742, 145, 46, DARK, -16], ["C", "安森林公園", 175, 892, 326, 62, GRN], ["C", "醫學大學", 1249, 1025, 270, 62, SLATE],
  ["C", "基隆路二段", 765, 975, 225, 44, DARK, -55], ["C", "敦化南路二段", 538, 1030, 265, 44, DARK, 89], ["C", "大安區", 373, 1093, 203, 62, "#444"],
  ["C", "夜市", 45, 1157, 116, 60, BLUE], ["C", "舊埤", 1395, 1187, 124, 54, DARK], ["C", "臺灣大學", 268, 1360, 278, 62, SLATE], ["C", "公館", 50, 1378, 105, 52, DARK],
  ["C", "公館", 219, 1457, 120, 54, DARK], ["C", "台北市立第二殯儀館", 662, 1473, 628, 62, SLATE], ["C", "富德公墓辦公室", 1453, 1308, 490, 62, GRN],
  ["D", "潭美街", 530, 65, 145, 46, DARK], ["D", "環東大道", 513, 120, 210, 52, "#8f5524", 7], ["D", "南港公園", 370, 335, 276, 62, GRN],
  ["D", "坑仔內", 1233, 338, 192, 54, DARK], ["D", "中央研究院", 1069, 433, 346, 62, SLATE], ["D", "李", 1440, 372, 54, 54, DARK], ["D", "舊莊", 1075, 655, 124, 54, DARK],
  ["D", "東勢", 1415, 630, 118, 54, DARK], ["D", "松山慈惠堂", 231, 812, 350, 62, SLATE], ["D", "三腦寮", 1402, 865, 188, 54, DARK], ["D", "南港區", 926, 915, 207, 64, "#333"],
  ["D", "四分里坑", 761, 1010, 264, 54, DARK], ["D", "下寮", 449, 1235, 124, 54, DARK], ["D", "三腳木", 1028, 1350, 192, 54, DARK],
  ["D", "富德靈骨樓詠", 598, 1390, 418, 62, SLATE], ["D", "愛園樹葬區", 595, 1452, 349, 62, SLATE], ["D", "馬陵街", 1340, 122, 140, 46, DARK, 48],
];

/* tile, x, y, colour, glyph */
const PINS: [Tile, number, number, string, string][] = [
  ["A", 526, 280, "#1f9ab5", "museum"], ["A", 52, 555, "#1f9ab5", "castle"], ["A", 795, 855, "#5a707e", "dot"], ["A", 97, 1445, "#5a707e", "wheel"],
  ["B", 225, 358, "#1f9ab5", "camera"], ["B", 99, 862, "#24943e", "tree"], ["B", 725, 872, "#24943e", "tree"], ["B", 375, 1190, "#e24343", "h"],
  ["C", 1372, 270, "#4a67f2", "cart"], ["C", 213, 722, "#4a67f2", "cart"], ["C", 900, 1008, "#5a707e", "cap"], ["C", 270, 1235, "#5a707e", "cap"],
  ["C", 655, 1345, "#5a707e", "dot"], ["C", 1446, 1395, "#24943e", "tree"], ["C", 880, 475, "#24a3bd", "ring"],
  ["D", 365, 420, "#24943e", "tree"], ["D", 229, 685, "#5a707e", "temple"], ["D", 1066, 520, "#5a707e", "dot"], ["D", 320, 1397, "#5a707e", "temple"],
];
const GLYPH: Record<string, any> = {
  museum: svg`<path d="M-26-8L0-24 26-8V-4H-26zM-22 0h7v18h-7zM-3.500 0h7v18h-7zM15 0h7v18h-7zM-26 19h52v6h-52z"/>`,
  castle: svg`<path d="M-22-24h9v7h8v-7h10v7h8v-7h9v14l-8 5v18l10 6v6h-48v-6l10-6v-18l-8-5z"/>`,
  dot: svg`<circle r="17"/>`,
  wheel: svg`<circle r="22" fill="none" stroke="#fff" stroke-width="6" stroke-dasharray="9 4"/><circle r="11" fill="none" stroke="#fff" stroke-width="5"/>`,
  camera: svg`<path d="M-30-14h18v-6h26v6h16v34h-60z"/><circle cy="3" r="11" fill="#1f9ab5"/><circle cy="3" r="5"/>`,
  tree: svg`<path d="M0-26L16-6H10L20 10H5V24H-5V10H-20L-10-6H-16z"/>`,
  h: svg`<path d="M-22-24h11v18h22v-18h11v48h-11v-20h-22v20h-11z"/>`,
  cart: svg`<path d="M-30-22h12l4 8h36l-8 22h-24l-4 6h30v5h-38l6-14-12-22h-2z"/><circle cx="-8" cy="22" r="5"/><circle cx="14" cy="22" r="5"/>`,
  cap: svg`<path d="M0-22L34-6 0 10-34-6zM-20 6L0 15 20 6V14Q0 28-20 14z"/>`,
  temple: svg`<path d="M-30 20V-2l10-12 8 12V20zM-9 20V-14L0-26 9-14V20H4V8h-8V20zM12 20V-2l8-12 10 12V20z"/>`,
  ring: svg`<circle r="26" opacity=".55"/><circle r="14" fill="#24a3bd" opacity=".6"/>`,
};
const STATIONS: [Tile, number, number][] = [
  ["A", 1070, 958], ["A", 1302, 1018], ["A", 618, 1510], ["B", 155, 1063], ["B", 425, 917], ["B", 802, 1233], ["B", 930, 1400],
  ["C", 78, 95], ["C", 400, 62], ["C", 625, 325], ["C", 67, 597], ["C", 383, 612], ["C", 580, 620], ["C", 785, 620], ["C", 1050, 625], ["C", 1517, 513],
  ["C", 377, 857], ["C", 655, 852], ["C", 660, 1125], ["C", 823, 1277], ["D", 1060, 85], ["D", 1087, 232],
];
const SHIELDS: [Tile, number, number, string][] = [
  ["C", 684, 615, "5"], ["D", 208, 405, "5"], ["D", 1382, 225, "5"], ["A", 187, 300, ""],
];
const FLOWERS: [Tile, number, number, string][] = [
  ["B", 187, 1425, "1"], ["B", 842, 1460, "1"], ["B", 1430, 1402, "1"], ["D", 1328, 520, "3"], ["D", 592, 1200, "3"],
];
const MARKS: [Tile, "car" | "man", number, number][] = [
  ["A", "car", 202, 368], ["A", "car", 1280, 1127], ["C", "car", 1025, 796],
  ["C", "man", 356, 230], ["C", "man", 818, 270], ["D", "man", 86, 318], ["B", "man", 1295, 1432],
];
const MARKTEXT: [Tile, string, number, number][] = [
  ["A", "ABC-", 201, 487], ["A", "1234", 200, 598], ["A", "(車)", 200, 710],
  ["A", "ABC-", 1278, 1247], ["A", "1234", 1277, 1356], ["A", "(車)", 1277, 1470],
  ["C", "ABC-", 1022, 918], ["C", "1234", 1021, 1022], ["C", "(車)", 1021, 1135],
  ["C", "f129", 212, 348], ["C", "6", 542, 348], ["C", "(人)", 354, 458],
  ["C", "V121", 678, 396], ["C", "(人)", 816, 506], ["D", "3 人", 80, 438], ["D", "6 人", 1290, 32],
];

/* Terrain facets: a fixed pseudo random sequence keeps the relief stable. */
const FACETS = (() => {
  let s = 11;
  const r = () => ((s = (s * 16807) % 2147483647) / 2147483647);
  const zones = [[2780, 570, 760, 250], [3200, 570, 560, 420], [3020, 1560, 500, 200], [3200, 1500, 560, 380], [2520, 800, 200, 120], [3560, 700, 220, 250]];
  return Array.from({ length: 130 }, (_, i) => {
    const [x, y, w, h] = zones[i % zones.length];
    const cx = x + r() * w, cy = y + r() * h, a = 12 + r() * 34, b = 8 + r() * 18;
    return {
      d: `M${cx - a} ${cy + b}L${cx - a * r()} ${cy - b * r()} ${cx + a} ${cy - b} ${cx + a * 0.4} ${cy + b * r()}z`,
      c: i % 4 === 0 ? "#d2e6c9" : "#a9cfb9",
    };
  });
})();

const tiles = ["A", "B", "C", "D"] as Tile[];
const byTile = <T extends [Tile, ...any[]]>(list: T[], draw: (t: T) => any) =>
  tiles.map((t) => svg`<g transform=${TILE[t]}>${list.filter((i) => i[0] === t).map(draw)}</g>`);

@customElement("city-map")
class CityMap extends LitElement {
  static styles = css`
    :host { display: block; background: #dee1e6; overflow: hidden; }
    svg { display: block; width: 1284px; height: 1349px; }
    text { text-anchor: middle; dominant-baseline: central; }
    .lb { font-family: "Noto Sans CJK TC", sans-serif; font-weight: 700; paint-order: stroke; stroke: rgba(255,255,255,.8); stroke-width: 9px; stroke-linejoin: round; }
    .mk { font-family: "Liberation Sans", "Noto Sans CJK TC", sans-serif; font-weight: 700; font-size: 76px; fill: #161616; paint-order: stroke; stroke: rgba(255,255,255,.55); stroke-width: 8px; }
    .no { font-family: "Liberation Sans", sans-serif; font-size: 38px; }
    .line { fill: none; stroke-linecap: round; stroke-linejoin: round; }
  `;
  render() {
    return html`<svg viewBox="2508 565 1284 1349">
      <defs>
        <linearGradient id="fade"><stop offset="0" stop-color="#6f8580"/><stop offset=".5" stop-color="#71877f"/><stop offset="1" stop-color="#93b6a4"/></linearGradient>
        <pattern id="streets" width="46" height="38" patternUnits="userSpaceOnUse" patternTransform="rotate(-2)">
          <path d="M0 6H46M0 25H30M10 0V38M32 0V38" stroke="#f5f6f8" stroke-width="2.500" fill="none"/>
          <path d="M14 10h14v11h-14z" fill="#fdf3d6" opacity=".7"/>
        </pattern>
        <pattern id="dense" width="22" height="20" patternUnits="userSpaceOnUse">
          <path d="M0 5H22M5 0V20M0 14H22M15 0V20" stroke="#f6f7f9" stroke-width="2" fill="none"/>
        </pattern>
      </defs>
      ${byTile(AREAS, ([, c, d]) => svg`<path d=${d} fill=${c}/>`)}
      <g opacity=".38">${FACETS.map((f) => svg`<path d=${f.d} fill=${f.c}/>`)}</g>
      <path d="M2700 935L2860 900 3080 915 3150 960 3130 1040 3020 1040 2700 1015zM2508 1230H3010L3020 1560 2880 1700 2508 1720zM3120 1060L3230 1010 3280 1080 3290 1210 3160 1220zM3180 1290L3480 1270 3600 1260 3600 1340 3240 1390z" fill="url(#streets)"/>
      <path d="M2600 1450L2830 1440 2850 1590 2600 1590zM2508 1510h80v80h-80z" fill="url(#dense)"/>
      ${byTile(STREAMS, ([, d, w]) => svg`<path class="line" d=${d} stroke=${w < 6 ? "#8fb0ee" : WATER} stroke-width=${w}/>`)}
      ${byTile(WHITE, ([, d, w]) => svg`<path class="line" d=${d} stroke="#fafbfc" stroke-width=${w}/>`)}
      ${byTile(HIGH, ([, d, w]) => svg`<path class="line" d=${d} stroke="#f3b547" stroke-width=${w}/>`)}
      ${byTile(HIGH, ([, d, w]) => svg`<path class="line" d=${d} stroke="#fee19b" stroke-width=${w * 0.62}/>`)}
      <g transform=${TILE.A}><path class="line" d="M130 1222L380 1238 770 1240" stroke="#f1b44c" stroke-width="6"/></g>
      ${byTile(BORDER, ([, d]) => svg`<path d=${d} fill="none" stroke="#6f7478" stroke-width="6" stroke-dasharray="14 13"/>`)}
      ${byTile(METRO, ([, d, c, w]) => svg`<path class="line" d=${d} stroke=${c} stroke-width=${w}/>`)}
      ${byTile(STATIONS, ([, x, y]) => svg`<g transform="translate(${x} ${y})">
        <rect x="-31" y="-28" width="62" height="56" rx="6" fill="#fff"/>
        <path d="M-24 4Q-8-14 12-13L-2 0-8 8z" fill="#3aa648"/><path d="M24-5Q8 14-14 13L2 0 8-8z" fill="#1a64b5"/></g>`)}
      ${byTile(SHIELDS, ([, x, y, n]) => svg`<g transform="translate(${x} ${y})">
        <path d="M-34-28Q0-42 34-28L42-8Q34 26 0 38-34 26-42-8z" fill="#2d51a8"/><text class="no" y="-2" fill="#fff">${n}</text></g>`)}
      ${byTile(FLOWERS, ([, x, y, n]) => svg`<g transform="translate(${x} ${y})" stroke="#6fa55a" stroke-width="5" fill="#fff">
        <path d="M0-36Q14-42 18-22 40-24 36-2 26 6 28 14 32 36 10 32 0 24-10 32-32 36-28 14-26 6-36-2-40-24-18-22-14-42 0-36z"/>
        <text class="no" stroke="none" fill="#333">${n}</text></g>`)}
      <g transform=${TILE.D}>
        <rect x="1217" y="994" width="106" height="52" fill="#fff" stroke="#777" stroke-width="6"/><text class="no" x="1270" y="1021" fill="#444">109</text>
        <rect x="1394" y="1412" width="110" height="78" fill="#f4f4f4" stroke="#777" stroke-width="7"/><text class="no" x="1440" y="1452" fill="#444">1</text>
        <circle cx="838" cy="283" r="25" fill="#4a2bc4"/><path class="line" d="M818 283h40M838 262v42M824 270q14 26 28 0M824 298q14-26 28 0" stroke="#e8e4ff" stroke-width="4"/>
      </g>
      <g transform=${TILE.C}><circle cx="1393" cy="395" r="25" fill="#4a2bc4"/><path class="line" d="M1373 395h40M1393 374v42M1379 382q14 26 28 0M1379 410q14-26 28 0" stroke="#e8e4ff" stroke-width="4"/></g>
      <g transform=${TILE.A} opacity=".8"><circle cx="1330" cy="1405" r="46" fill="#4a67f2"/><path d="M1308 1390h44v32h-44z" fill="#b6c4fb"/></g>
      ${byTile(LABELS, ([, t, x, y, w, s, c, a]) => svg`<text class="lb" x=${x} y=${y} font-size=${s} fill=${c}
        textLength=${w} transform=${a ? `rotate(${a} ${x} ${y})` : nothing}>${t}</text>`)}
      <g transform=${TILE.C}><text class="lb" x="1020" y="862" font-size="104" fill="#333" textLength="240">台北</text></g>
      ${byTile(PINS, ([, x, y, c, g]) => svg`<g transform="translate(${x} ${y})">
        <path d="M0 82Q-4 62-26 42A50 50 0 1 1 26 42Q4 62 0 82z" fill=${c}/><g fill="#fff">${GLYPH[g]}</g></g>`)}
      ${byTile(MARKS, ([, k, x, y]) => svg`<g transform="translate(${x} ${y})">
        <circle r="72" fill=${k === "car" ? "#50d140" : "#42adc9"}/>
        ${k === "car"
          ? svg`<path class="line" d="M-38 20V-2L-26-32Q0-38 26-32L38-2V20zM-38-2H38M-22 11H-14M14 11H22M-30 22V32M30 22V32" stroke="#f1fbe9" stroke-width="8"/>`
          : svg`<g class="line" stroke="#eafaff" stroke-width="8"><circle cy="-14" r="19"/><path d="M-35 31Q-35 10-12 10H12Q35 10 35 31z"/></g>`}
      </g>`)}
      ${byTile(MARKTEXT, ([, t, x, y]) => svg`<text class="mk" x=${x} y=${y}>${t}</text>`)}
      <g transform=${TILE.C}>
        <rect x="268" y="332" width="244" height="58" fill="#8d8b89"/>
        <rect x="768" y="332" width="344" height="90" fill="url(#fade)"/>
        <rect x="1000" y="862" width="63" height="190" fill="#8c8a8a"/>
        <g transform="translate(1432 142) scale(4.200 4)" stroke="#222" stroke-width="1.200" fill="#fff" stroke-linejoin="round">
          <path d="M-6 9L-10 1Q-10-2-7-1L-5 2V-7Q-4-9-2.500-7V-9Q-1-11 1-9V-8Q3-9 4-7V-5Q7-6 7-3V3L5 9z"/><path d="M-2.500-7V-1M1-8V-1M4-6V-1" fill="none"/>
        </g>
      </g>
    </svg>`;
  }
}

/* -------------------------------------------------------------------- app */
const NAV: { ic: string; t: string; a?: "down" | "up"; sub?: string[] }[] = [
  { ic: "shield", t: "治安決策", a: "down" },
  { ic: "docsearch", t: "綜合查詢" },
  { ic: "news", t: "刑案管理" },
  { ic: "docsafe", t: "資料維護", a: "down" },
  { ic: "smart", t: "智慧分析", a: "up", sub: ["關聯分析", "時空分析", "可疑交通工具"] },
  { ic: "image", t: "影像分析" },
  { ic: "finger", t: "數位證物勘驗管理" },
  { ic: "track", t: "關鍵字追蹤" },
  { ic: "folder", t: "刑事業務管理系統", a: "down" },
  { ic: "gear", t: "系統管理", a: "down" },
];
const LIST: [Kind, string, number][] = [["user", "人", 19], ["barcode", "IMEI", 6], ["phone", "手機", 43], ["car", "車", 21], ["home", "地址", 21]];

/* x1 y1 x2 y2 opacity */
const WEB: number[][] = [
  [385, 1520, 207, 1649, .6], [385, 1520, 538, 1751, .3], [207, 1649, 486, 1830, .65], [207, 1649, 6, 1857, .55], [207, 1649, 26, 1772, .25], [207, 1649, 352, 1888, .15],
  [207, 1649, 138, 1328, .4], [207, 1649, 0, 1668, .4], [486, 1830, 583, 1895, .3], [538, 1751, 583, 1895, .15], [486, 1830, 538, 1757, .2], [486, 1830, 317, 2079, .5],
  [6, 1857, 350, 1880, .4], [6, 1857, 583, 1895, .3], [583, 1895, 173, 1999, .25], [583, 1895, 317, 2079, .5], [6, 1857, 173, 1999, .6], [173, 1999, 317, 2079, .5], [317, 2079, 450, 2160, .5],
  [6, 1857, 27, 1987, .45], [27, 1987, 122, 2160, .5], [6, 1857, 137, 2160, .3], [6, 1857, 0, 1882, .5], [173, 1999, 182, 2160, .4], [27, 1987, 173, 1999, .3], [0, 1990, 360, 2034, .2],
  [26, 1772, 380, 2036, .22], [26, 1772, 0, 1795, .25], [26, 1772, 0, 1628, .25], [317, 2079, 197, 2160, .35], [297, 1967, 153, 2160, .15], [0, 2116, 320, 2053, .15], [27, 1987, 0, 2025, .3], [0, 2132, 45, 2160, .3],
  [540, 1800, 512, 2160, .12], [352, 1888, 380, 1990, .12],
  [124, 1116, 0, 1170, .4], [124, 1116, 0, 1325, .35], [124, 1116, 138, 1328, .2], [124, 1116, 200, 1235, .15], [138, 1328, 0, 1250, .6], [138, 1328, 0, 1468, .3], [138, 1328, 200, 1265, .1],
  [84, 775, 27, 900, .45], [27, 900, 0, 975, .35], [0, 314, 118, 456, .4], [0, 372, 115, 456, .5], [118, 456, 200, 528, .15], [0, 495, 200, 528, .35], [200, 528, 0, 556, .45], [200, 528, 0, 598, .55],
  [200, 528, 44, 679, .3], [200, 528, 130, 679, .18], [0, 700, 70, 660, .2],
];
const GLOW: number[][] = [[207, 1645, 46, .8], [385, 1519, 22, .8], [486, 1830, 24, .8], [317, 2079, 28, .9], [173, 1999, 16, .6], [350, 1740, 22, .5], [160, 1867, 34, .5], [40, 1665, 24, .5], [27, 1987, 14, .6],
  [124, 1116, 26, .8], [138, 1328, 18, .6], [47, 850, 30, .35], [200, 528, 42, .45], [5, 1857, 16, .6]];
const HEADWEB: number[][] = [
  [569, 0, 659, 128, .25], [623, 0, 687, 128, .22], [735, 0, 745, 128, .12], [790, 0, 773, 128, .15], [831, 0, 797, 128, .15], [948, 0, 857, 128, .18], [1159, 0, 966, 128, .18],
  [1861, 56, 1700, 0, .2], [1861, 56, 1760, 128, .22], [1861, 56, 2010, 0, .3], [1861, 56, 2258, 93, .22], [1861, 56, 1400, 128, .12], [1861, 56, 1940, 128, .2], [2258, 93, 2010, 0, .25], [2258, 93, 2300, 128, .25],
  [2258, 93, 2376, 128, .2], [2258, 93, 2325, 0, .22], [2220, 93, 2376, 128, .15], [2258, 93, 2220, 128, .25], [1861, 56, 1800, 0, .15],
  [2871, 0, 2863, 128, .2], [2984, 0, 2925, 128, .25], [3053, 0, 2960, 128, .35], [3183, 0, 3247, 128, .25], [3250, 0, 3256, 128, .6], [3392, 0, 3469, 128, .4], [3493, 0, 3501, 128, .18], [3508, 0, 3519, 128, .18],
  [3655, 0, 3840, 115, .2], [3734, 0, 3840, 92, .35], [3840, 92, 3805, 128, .3], [3682, 0, 3663, 128, .12],
];
const HEADGLOW: number[][] = [[1861, 56, 56, .5], [2258, 93, 34, .45], [3256, 120, 40, .4]];

const web = (lines: number[][], glow: number[][]) => svg`
  <defs><radialGradient id="gl"><stop offset="0" stop-color="#12b0cf" stop-opacity=".9"/><stop offset=".25" stop-color="#0c7f9c" stop-opacity=".45"/><stop offset="1" stop-color="#04324c" stop-opacity="0"/></radialGradient></defs>
  ${glow.map(([x, y, r, o]) => svg`<circle cx=${x} cy=${y} r=${r} fill="url(#gl)" opacity=${o}/>`)}
  ${lines.map(([a, b, c, d, o]) => svg`<line x1=${a} y1=${b} x2=${c} y2=${d} stroke="#16a3b5" stroke-width="2" opacity=${o * 0.9}/>`)}`;

@customElement("app-root")
class AppRoot extends LitElement {
  @property() user = "Administrator";

  static styles = [shared, css`
    :host { display: block; width: 3840px; height: 2160px; overflow: hidden; color: #fff; font-family: "Noto Sans CJK TC", sans-serif; background: #031a2d; }
    .page { height: 2160px; display: grid; grid-template: 118px 1fr / 616px 1fr; background: #07233b; border-radius: 50px; overflow: hidden; border: solid #031a2d; border-width: 2px 0; }
    .bgline { position: absolute; left: 0; top: 0; }
    header { grid-column: 1 / 3; position: relative; height: 126px; background: #0a1f38; display: flex; align-items: center; padding: 0 43px 3px 40px; }
    .brand { position: relative; display: flex; align-items: center; gap: 15px; font-size: 40px; font-weight: 500; line-height: 56px; }
    .status { position: relative; margin-left: auto; display: flex; align-items: center; font-size: 32px; line-height: 44px; font-weight: 500; }
    .status .a { margin-right: 48px; }
    .status .b { margin-right: 49px; }
    .status .bar { width: 2px; height: 32px; margin: 0 15px 0 14px; background: #8b97a3; }
    .status .u { margin-right: 93px; }
    .acts { display: flex; gap: 87px; }
    nav { position: relative; z-index: 1; background: #001f36; overflow: hidden; }
    .menu { position: relative; display: flex; flex-direction: column; }
    .item { height: 112px; padding: 0 42px 0 42px; display: flex; align-items: center; gap: 18px; border-bottom: 3px solid #123f62; font-size: 32px; font-weight: 700; line-height: 44px; }
    .item .arr { margin-left: auto; }
    .sub { height: 96px; padding-left: 104px; display: flex; align-items: center; font-size: 32px; line-height: 44px; }
    .sub.on { background: #1f507a; }
    main { padding: 49px 48px 0 58px; display: flex; flex-direction: column; }
    .crumb { font-size: 32px; line-height: 44px; color: #8b929a; white-space: pre; }
    .top { display: flex; align-items: center; gap: 24px; height: 96px; margin-top: 25px; margin-bottom: 24px; }
    .top h1 { margin: 0 auto 0 0; font-size: 40px; font-weight: 700; line-height: 56px; }
    .cta { height: 96px; border-radius: 8px; display: flex; align-items: center; justify-content: center; gap: 14px; font-size: 28px; font-weight: 700; background: #ced0d2; color: #4c525b; }
    .cta.blue { background: #3c82f6; color: #fff; width: 232px; padding-left: 6px; }
    .cta.s { width: 176px; padding-left: 3px; }
    .cta.v { width: 260px; gap: 20px; padding-right: 8px; }
    .panels { height: 1740px; display: grid; grid-template-columns: 536px 1290px 1284px; column-gap: 4px; background: #021729; }
    .panel { background: #0d344c; display: flex; flex-direction: column; min-width: 0; }
    .lh { height: 110px; padding: 1px 27px 0 32px; display: flex; align-items: center; font-size: 32px; font-weight: 700; }
    .lh span { margin-right: auto; }
    .lh .btn { margin-right: 12px; width: 67px; height: 67px; }
    .lh .tog { width: 108px; margin-right: 0; border-radius: 34px; justify-content: space-between; padding: 0 8px 0 11px; }
    .dot { width: 36px; height: 36px; border-radius: 50%; background: #fff; }
    .search { height: 122px; background: #133e5e; display: flex; align-items: center; gap: 17px; padding: 0 12px 0 17px; }
    .inp { width: 370px; height: 86px; background: #021520; border: 2px solid #12334a; border-radius: 14px; font-size: 32px; color: #7e868d; padding-left: 18px; display: flex; align-items: center; }
    .go { width: 120px; height: 88px; border-radius: 6px; background: #3c82f6; font-size: 28px; font-weight: 700; display: flex; align-items: center; justify-content: center; }
    .all { height: 80px; border-bottom: 2px solid #123f5e; padding: 2px 13px 0 16px; display: flex; align-items: center; font-size: 28px; }
    .all .t { margin-left: 24px; margin-right: auto; }
    .all .n { font-size: 24px; color: #a5adb5; }
    .cb { width: 32px; height: 32px; border-radius: 6px; background: #3c82f6; display: flex; align-items: center; justify-content: center; flex: none; }
    .row { height: 104px; padding: 0 12px 0 16px; display: flex; align-items: center; font-size: 28px; }
    .ic { width: 64px; height: 64px; border-radius: 50%; margin: 0 23px 0 24px; display: flex; align-items: center; justify-content: center; }
    .row .pill { margin-left: auto; height: 50px; min-width: 48px; border-radius: 25px; padding: 0 17px; background: #35c1dc; font-size: 24px; font-weight: 700; display: flex; align-items: center; }
    .foot { margin-top: auto; height: 88px; display: flex; font-size: 28px; font-weight: 500; }
    .foot div { flex: 1; display: flex; align-items: center; justify-content: center; background: #133e60; color: #a8b1ba; padding-left: 2px; }
    .foot .go2 { flex: none; width: 270px; background: #3c82f6; color: #fff; font-weight: 700; }
    .ph { height: 94px; padding: 3px 0 0 32px; border-bottom: 3px solid #123d5c; font-size: 32px; font-weight: 700; line-height: 88px; }
    .ph.g { padding-left: 27px; padding-top: 2px; }
    .tb { height: 200px; padding: 24px 100px 0 30px; display: flex; flex-wrap: wrap; gap: 16px 12px; align-content: flex-start; align-items: center; border-bottom: 3px solid #052338; }
    .tb.g { height: 113px; padding: 22px 30px 0 26px; }
    .seg { display: flex; height: 68px; border: 2px solid #1e6c96; border-radius: 10px; overflow: hidden; font-size: 28px; font-weight: 700; }
    .seg div { width: 88px; display: flex; align-items: center; justify-content: center; }
    .seg div + div { border-left: 2px solid #1e6c96; padding-right: 2px; }
    .seg .on { background: #1e9cc9; }
    .seg .off { color: #6b7780; }
    .seg.i div { width: 64px; }
    .sel { width: 112px; height: 68px; border: 2px solid #1e6c96; border-radius: 10px; display: flex; align-items: center; justify-content: space-between; padding: 0 20px 0 16px; font-size: 28px; font-weight: 700; }
    .sel.w { width: 140px; }
    .vb { width: 2px; height: 68px; background: #45606f; margin: 0 2px; }
    .grey { border-color: #4d5b66; }
    .dim { color: #66747e; }
    .push { margin-left: auto; }
    link-graph { height: 1262px; }
    time-player { flex: 1; }
    .mid time-player { border-top: 2px solid #0a2a40; }
    city-map { height: 1349px; }
  `];

  render() {
    return html`<div class="page">
      <header>
        <svg class="bgline" width="3840" height="126">${web(HEADWEB, HEADGLOW)}</svg>
        <div class="brand">
          <svg width="80" height="68" viewBox="0 0 80 68" fill="none" stroke-width="7">
            <path stroke="#d9a33c" d="M1 3L18 17Q20 19 20 24"/><path stroke="#1760b8" d="M1 22L14 33Q20 40 15 47L1 65"/>
            <path stroke="#e0b055" d="M33 4V64M46 4V64" stroke-linecap="round"/>
            <path stroke="#1760b8" d="M79 3L65 17Q58 24 63 31L79 46"/><path stroke="#d9a33c" d="M60 43Q60 47 63 50L79 65"/>
          </svg>
          <span>視覺化關聯分析模組</span>
        </div>
        <div class="status">
          <span class="a">登出倒數：19分20秒</span><span class="b">目前在線人數 1 人</span>
          <span>系統管理員</span><span class="bar"></span><span class="u">${this.user}</span>
          <div class="acts">${icon("account", 42, 1.7)}${icon("expand", 40)}${icon("logout", 42)}</div>
        </div>
      </header>
      <nav>
        <svg class="bgline" width="616" height="2040" viewBox="0 120 616 2040">${web(WEB, GLOW)}</svg>
        <div class="menu">${NAV.map((n) => html`
          <div class="item">${icon(n.ic, 44)}<span>${n.t}</span>${n.a ? html`<span class="arr">${icon(n.a, 42)}</span>` : nothing}</div>
          ${n.sub ? n.sub.map((s, i) => html`<div class=${classMap({ sub: true, on: i === 0 })}>${s}</div>`) : nothing}`)}
        </div>
      </nav>
      <main>
        <div class="crumb">首頁 / 案件資源管理  / 關聯分析</div>
        <div class="top">
          <h1>關聯分析</h1>
          <div class="cta blue">${icon("plusbox", 38, 1.7)}新增情資</div>
          <div class="cta s">${icon("save", 38, 1.9)}儲存</div>
          <div class="cta v">視覺畫圖表${icon("down", 24)}</div>
        </div>
        <div class="panels">
          <section class="panel">
            <div class="lh"><span>情資清單</span>
              <div class="btn">${icon("filter", 40)}</div><div class="btn">${icon("cloud", 42)}</div>
              <div class="btn tog"><div class="dot"></div>${icon("swap", 38)}</div></div>
            <div class="search"><div class="inp">請輸入關鍵字</div><div class="go">查詢</div></div>
            <div class="all"><div class="cb">${icon("check", 26, 1.6)}</div><span class="t">全選</span><span class="n">已選取情資200筆</span></div>
            ${LIST.map(([k, t, n]) => html`<div class="row"><div class="cb">${icon("check", 26, 1.6)}</div>
              <div class="ic" style="background:${COLORS[k]}">${icon(k, k === "barcode" ? 44 : k === "user" || k === "phone" ? 36 : 42, 1.5)}</div>
              <span>${t}</span><span class="pill">${n}</span></div>`)}
            <div class="foot"><div class="go2">分析</div><div>全部清除</div></div>
          </section>
          <section class="panel mid">
            <div class="ph">關聯分析</div>
            <div class="tb">
              <div class="seg"><div class="on">標準</div><div class="off">階層</div><div class="off">放射</div><div>結構</div><div>圖片</div></div>
              <div class="sel">無${icon("down", 22)}</div>
              <div class="btn">${icon("refresh", 38)}</div><div class="vb"></div>
              <div class="btn">${icon("plusbox", 38)}</div><div class="btn dim">${icon("pencil", 38)}</div><div class="btn">${icon("trend", 40)}</div>
              <div class="btn">${icon("trash", 38)}</div><div class="btn">${icon("merge", 36)}</div><div class="btn">${icon("split", 36)}</div>
              <div class="vb"></div>
              <div class="btn grey">${icon("save", 40)}</div><div class="btn grey">${icon("frame", 40)}</div>
            </div>
            <link-graph></link-graph>
            <time-player></time-player>
          </section>
          <section class="panel">
            <div class="ph g">地理分析</div>
            <div class="tb g">
              <div class="seg"><div class="on">標準</div><div>衛星</div></div>
              <div class="btn push">${icon("frame", 40)}</div>
              <div class="sel w">標準${icon("down", 22)}</div>
              <div class="seg i"><div class="on">${icon("move", 38)}</div><div>${icon("ruler", 40)}</div></div>
              <div class="btn">${icon("sliders", 38)}</div><div class="btn">${icon("cloud", 42)}</div><div class="btn">${icon("refresh", 36)}</div>
            </div>
            <city-map></city-map>
            <time-player narrow></time-player>
          </section>
        </div>
      </main>
    </div>`;
  }
}
